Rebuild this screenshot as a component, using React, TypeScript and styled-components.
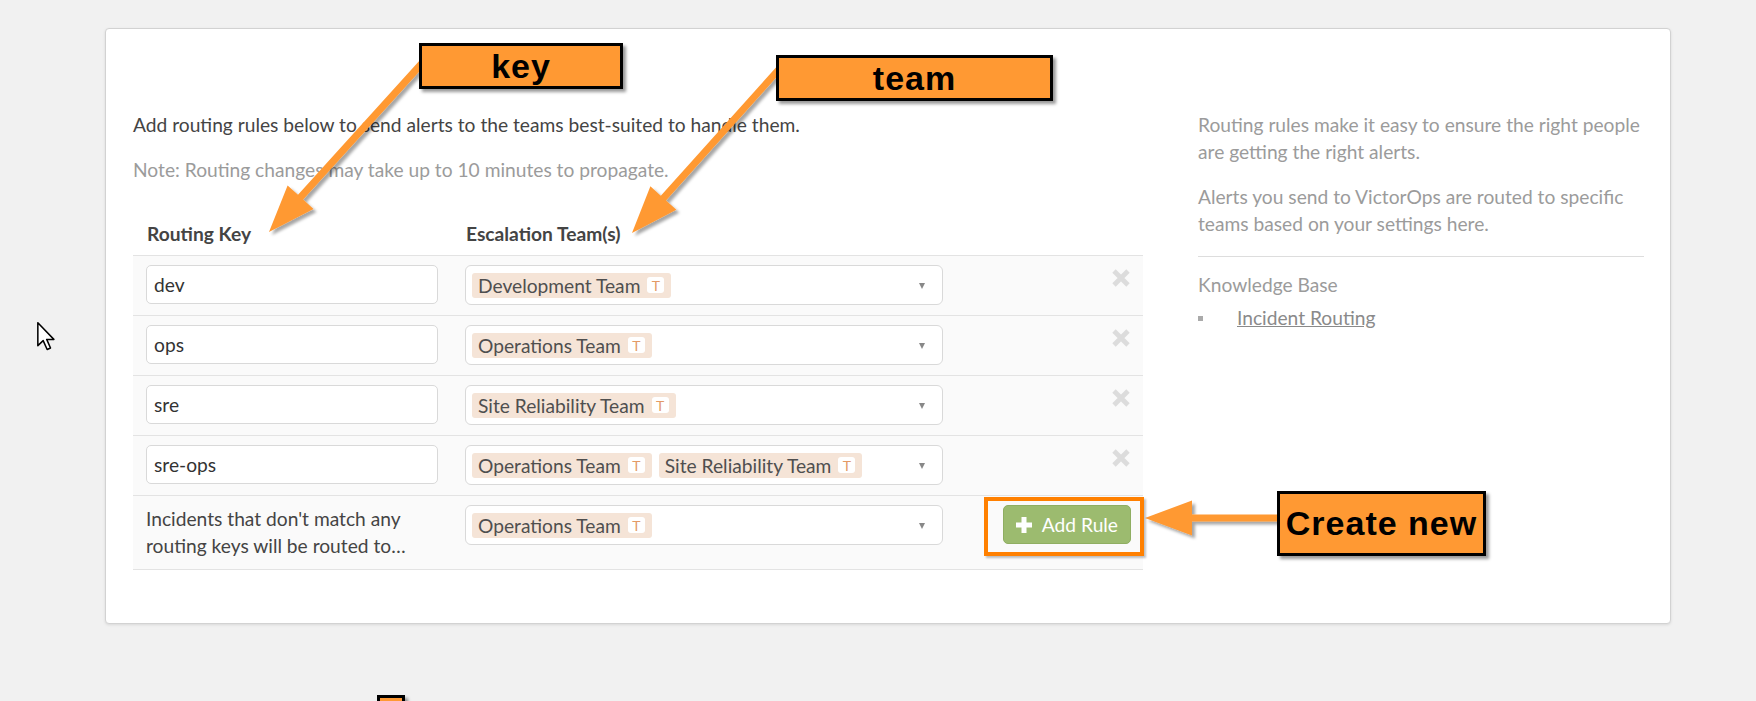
import React from "react";
import styled, { createGlobalStyle } from "styled-components";

const FS = "19.2px";

const GlobalStyle = createGlobalStyle`
  html, body { margin: 0; padding: 0; background: #f1f1f1; }
  body { font-family: Lato, "Open Sans", sans-serif; color: #444; }
  * { box-sizing: border-box; }
`;

const Page = styled.div`
  position: relative;
  height: 701px;
  overflow: hidden;
  padding: 28px 0 0 105px;
`;

const Card = styled.div`
  width: 1566px;
  background: #fff;
  border: 1px solid #d2d2d2;
  border-radius: 4px;
  box-shadow: 0 1px 3px rgba(0, 0, 0, 0.1);
  padding: 82px 26px 53px 27px;
  display: flex;
  align-items: flex-start;
  gap: 55px;
`;

const Main = styled.div`
  width: 1010px;
  flex: none;
`;

const Side = styled.aside`
  width: 446px;
  flex: none;
`;

const Text = styled.p<{ $muted?: boolean }>`
  margin: 0 0 18px;
  font-size: ${FS};
  line-height: 27px;
  color: ${(p) => (p.$muted ? "#9b9b9b" : "#444")};
`;

const Table = styled.div`
  margin-top: 29px;
  border-bottom: 1px solid #e3e3e3;
`;

const Row = styled.div<{ $head?: boolean }>`
  display: grid;
  grid-template-columns: 319px 505px 1fr;
  align-items: start;
  background: ${(p) => (p.$head ? "transparent" : "#fafafa")};
  border-top: ${(p) => (p.$head ? "none" : "1px solid #e3e3e3")};
`;

const HeadCell = styled.div`
  padding: 8px 14px;
  font-size: ${FS};
  line-height: 27px;
  font-weight: 700;
  color: #444;
`;

const Cell = styled.div<{ $end?: boolean }>`
  padding: 9px ${(p) => (p.$end ? "12px" : "14px")} 10px 13px;
  display: flex;
  justify-content: ${(p) => (p.$end ? "flex-end" : "flex-start")};
`;

const KeyInput = styled.input`
  width: 100%;
  height: 39px;
  border: 1px solid #d9d9d9;
  border-radius: 5px;
  padding: 0 7px;
  font-family: Lato, sans-serif;
  font-size: ${FS};
  color: #333;
  background: #fff;
  outline: none;
`;

const DefaultText = styled.div`
  font-size: ${FS};
  line-height: 27px;
  color: #444;
`;

const Select = styled.div`
  width: 100%;
  height: 40px;
  border: 1px solid #d9d9d9;
  border-radius: 6px;
  background: #fff;
  display: flex;
  align-items: center;
  padding: 0 17px 0 6px;
`;

const Tags = styled.div`
  flex: 1;
  display: flex;
  align-items: center;
  gap: 7px;
`;

const Caret = styled.span`
  width: 0;
  height: 0;
  border-left: 3.5px solid transparent;
  border-right: 3.5px solid transparent;
  border-top: 6px solid #888;
  margin-top: 2px;
`;

const Tag = styled.span`
  display: inline-flex;
  align-items: center;
  height: 25px;
  padding: 0 7px 0 6px;
  gap: 7px;
  background: #f5e4d7;
  border-radius: 3px;
  font-size: ${FS};
  color: #4f4f4f;
  white-space: nowrap;
`;

const Badge = styled.span`
  width: 17px;
  height: 16px;
  background: #fff;
  border-radius: 3px;
  color: #e39a66;
  font-size: 14px;
  display: flex;
  align-items: center;
  justify-content: center;
`;

const RemoveButton = styled.button`
  margin-top: 3px;
  padding: 0;
  border: 0;
  background: none;
  width: 20px;
  height: 20px;
  display: flex;
`;

const AddButton = styled.button`
  height: 39px;
  padding: 0 12px 0 11px;
  display: inline-flex;
  align-items: center;
  gap: 9px;
  background: #9cbb6f;
  border: 1px solid #8fae62;
  border-radius: 5px;
  color: #fff;
  font-family: Lato, sans-serif;
  font-size: ${FS};
`;

const Divider = styled.hr`
  border: 0;
  border-top: 1px solid #ddd;
  margin: 19px 0 14px;
`;

const KBTitle = styled.div`
  font-size: ${FS};
  line-height: 27px;
  color: #9b9b9b;
  margin-bottom: 6px;
`;

const KBList = styled.ul`
  list-style: none;
  margin: 0;
  padding: 0;
`;

const KBItem = styled.li`
  display: flex;
  align-items: center;
  gap: 34px;
  font-size: ${FS};
  line-height: 27px;
`;

const Bullet = styled.span`
  width: 5px;
  height: 5px;
  background: #aaa;
  margin-top: 2px;
`;

const KBLink = styled.a`
  color: #8a8a8a;
  text-decoration: underline;
`;

/* ---------- annotation layer (drawn over the page) ---------- */

const Overlay = styled.svg`
  position: absolute;
  left: 0;
  top: 0;
  width: 1756px;
  height: 701px;
  pointer-events: none;
`;

const Callout = styled.div<{ $x: number; $y: number; $w: number; $h: number }>`
  position: absolute;
  left: ${(p) => p.$x}px;
  top: ${(p) => p.$y}px;
  width: ${(p) => p.$w}px;
  height: ${(p) => p.$h}px;
  background: #ff9933;
  border: 3px solid #000;
  box-shadow: 3px 3px 3px rgba(0, 0, 0, 0.4);
  display: flex;
  align-items: center;
  justify-content: center;
  font-family: "Liberation Sans", Arial, sans-serif;
  font-weight: 700;
  font-size: 34px;
  letter-spacing: 1px;
  color: #000;
`;

const Highlight = styled.div`
  position: absolute;
  left: 984px;
  top: 497px;
  width: 160px;
  height: 59px;
  border: 4px solid #ff8000;
  box-shadow: 2px 2px 2px rgba(0, 0, 0, 0.25);
`;

const Cursor = styled.svg`
  position: absolute;
  left: 37px;
  top: 322px;
`;

function arrowPoints(sx: number, sy: number, tx: number, ty: number) {
  const shaft = 3.5;
  const headW = 17.5;
  const headL = 47;
  const dx = tx - sx;
  const dy = ty - sy;
  const len = Math.hypot(dx, dy);
  const ux = dx / len;
  const uy = dy / len;
  const px = -uy;
  const py = ux;
  const bx = tx - ux * headL;
  const by = ty - uy * headL;
  const pts = [
    [sx + px * shaft, sy + py * shaft],
    [bx + px * shaft, by + py * shaft],
    [bx + px * headW, by + py * headW],
    [tx, ty],
    [bx - px * headW, by - py * headW],
    [bx - px * shaft, by - py * shaft],
    [sx - px * shaft, sy - py * shaft],
  ];
  return pts.map((p) => `${p[0].toFixed(1)},${p[1].toFixed(1)}`).join(" ");
}

const XIcon = () => (
  <svg width="20" height="20" viewBox="0 0 20 20">
    <path d="M3 3 L17 17 M17 3 L3 17" stroke="#dcdcdc" strokeWidth="4.8" />
  </svg>
);

const PlusIcon = () => (
  <svg width="18" height="18" viewBox="0 0 18 18">
    <path d="M9 1 V17 M1 9 H17" stroke="#fff" strokeWidth="5" />
  </svg>
);

type Rule = { key: string; teams: string[] };

const rules: Rule[] = [
  { key: "dev", teams: ["Development Team"] },
  { key: "ops", teams: ["Operations Team"] },
  { key: "sre", teams: ["Site Reliability Team"] },
  { key: "sre-ops", teams: ["Operations Team", "Site Reliability Team"] },
];

const TeamSelect = ({ teams }: { teams: string[] }) => (
  <Select>
    <Tags>
      {teams.map((t) => (
        <Tag key={t}>
          {t}
          <Badge>T</Badge>
        </Tag>
      ))}
    </Tags>
    <Caret />
  </Select>
);

export default function App() {
  return (
    <>
      <GlobalStyle />
      <Page>
        <Card>
          <Main>
            <Text>Add routing rules below to send alerts to the teams best-suited to handle them.</Text>
            <Text $muted>Note: Routing changes may take up to 10 minutes to propagate.</Text>
            <Table>
              <Row $head>
                <HeadCell>Routing Key</HeadCell>
                <HeadCell>Escalation Team(s)</HeadCell>
                <HeadCell />
              </Row>
              {rules.map((r) => (
                <Row key={r.key}>
                  <Cell>
                    <KeyInput value={r.key} readOnly />
                  </Cell>
                  <Cell>
                    <TeamSelect teams={r.teams} />
                  </Cell>
                  <Cell $end>
                    <RemoveButton aria-label="Remove">
                      <XIcon />
                    </RemoveButton>
                  </Cell>
                </Row>
              ))}
              <Row>
                <Cell>
                  <DefaultText>Incidents that don't match any routing keys will be routed to…</DefaultText>
                </Cell>
                <Cell>
                  <TeamSelect teams={["Operations Team"]} />
                </Cell>
                <Cell $end>
                  <AddButton>
                    <PlusIcon />
                    Add Rule
                  </AddButton>
                </Cell>
              </Row>
            </Table>
          </Main>
          <Side>
            <Text $muted>Routing rules make it easy to ensure the right people are getting the right alerts.</Text>
            <Text $muted>Alerts you send to VictorOps are routed to specific teams based on your settings here.</Text>
            <Divider />
            <KBTitle>Knowledge Base</KBTitle>
            <KBList>
              <KBItem>
                <Bullet />
                <KBLink href="#">Incident Routing</KBLink>
              </KBItem>
            </KBList>
          </Side>
        </Card>

        <Overlay viewBox="0 0 1756 701">
          <defs>
            <filter id="arrowShadow" x="-20%" y="-20%" width="140%" height="140%">
              <feDropShadow dx="3" dy="3" stdDeviation="1.5" floodColor="#000" floodOpacity="0.35" />
            </filter>
          </defs>
          <g fill="#ff9933" filter="url(#arrowShadow)">
            <polygon points={arrowPoints(424, 61, 269, 232)} />
            <polygon points={arrowPoints(781, 67, 632, 233)} />
            <polygon points={arrowPoints(1282, 518, 1145, 518)} />
          </g>
        </Overlay>

        <Highlight />
        <Callout $x={419} $y={43} $w={204} $h={46}>key</Callout>
        <Callout $x={776} $y={55} $w={277} $h={46}>team</Callout>
        <Callout $x={1277} $y={491} $w={209} $h={65}>Create new</Callout>
        <Callout $x={377} $y={695} $w={28} $h={30} />

        <Cursor width="20" height="29" viewBox="0 0 13 19">
          <path
            d="M0.5 0.5 L0.5 15.5 L4 12.2 L6.6 18 L8.8 17 L6.3 11.4 L11 11.4 Z"
            fill="#fff"
            stroke="#000"
            strokeWidth="1"
            strokeLinejoin="round"
          />
        </Cursor>
      </Page>
    </>
  );
}
